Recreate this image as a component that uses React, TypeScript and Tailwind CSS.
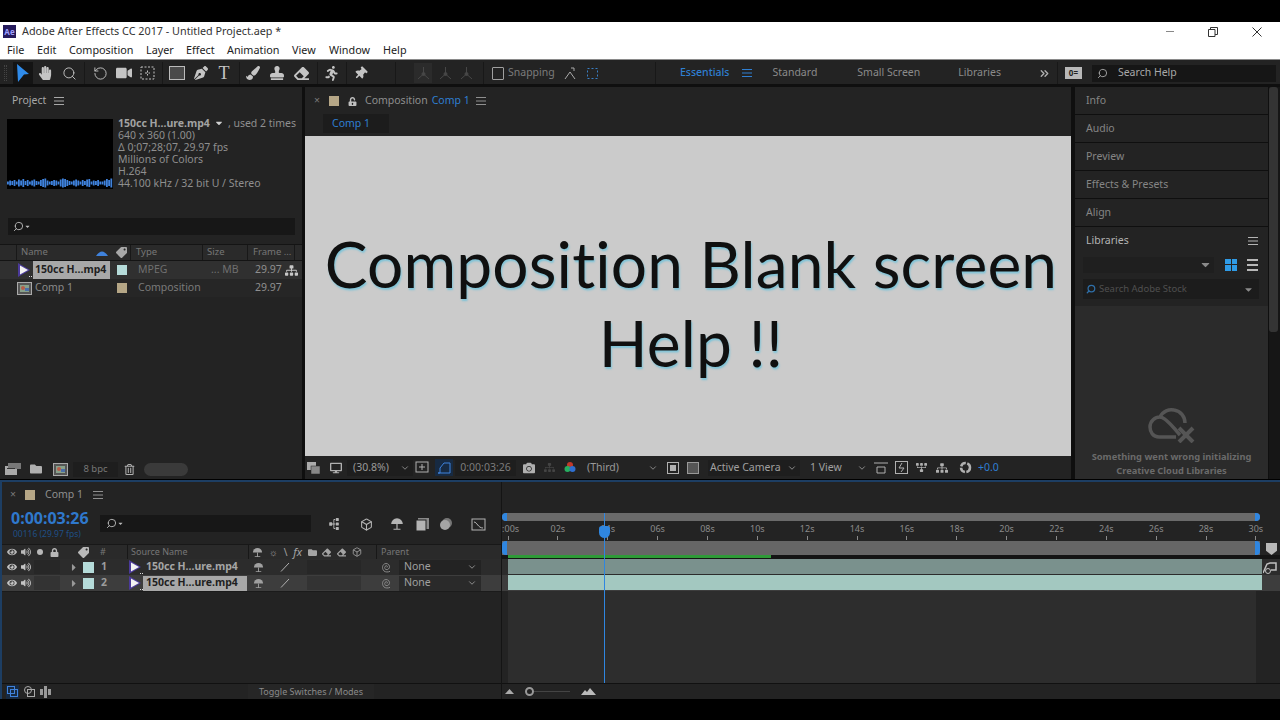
import { ReactNode } from 'react'
import { Search, RotateCcw, ChevronDown, ChevronsRight, Box } from 'lucide-react'
import {
  FaHandPaper, FaVideo, FaPenNib, FaPaintBrush, FaStamp, FaEraser, FaRunning, FaThumbtack,
  FaCamera, FaRegTrashAlt, FaFolder, FaSitemap, FaTag, FaEye, FaVolumeUp, FaLock, FaUnlockAlt,
  FaDesktop, FaCaretDown, FaCaretRight,
} from 'react-icons/fa'

function Slot({ className = '', children }: { className?: string; children?: ReactNode }) {
  return <div className={`flex items-center justify-center shrink-0 ${className}`}>{children}</div>
}

function Burger({ className = '' }: { className?: string }) {
  return (
    <svg width="10" height="8" viewBox="0 0 10 8" className={className}>
      <path d="M0 .5h10M0 4h10M0 7.5h10" stroke="currentColor" strokeWidth="1" />
    </svg>
  )
}

function Sep({ className = '' }: { className?: string }) {
  return <div className={`w-px self-stretch bg-[#181818] shrink-0 ${className}`} />
}

function AxisIcon() {
  return (
    <svg width="13" height="14" viewBox="0 0 13 14" fill="none" stroke="#474747">
      <path d="M6.500 1v7M6.500 8L1 13M6.500 8l5.500 5" />
      <circle cx="6.500" cy="8" r="1.500" fill="#474747" />
    </svg>
  )
}

// the "shy" switch: a dome on a stem
function ShyIcon({ size = 11 }: { size?: number }) {
  return (
    <svg width={size} height={size} viewBox="0 0 12 12" fill="currentColor">
      <path d="M1 6a5 5 0 0 1 10 0z" />
      <path d="M5.500 6h1v4h-1zM3 10h6v1H3z" />
    </svg>
  )
}

function FootageIcon() {
  return (
    <svg width="15" height="16" viewBox="0 0 15 16" className="shrink-0">
      <path d="M1 1v14l12-7z" fill="#4b3a9a" />
      <path d="M3 3.500v9l8-4.500z" fill="#f2f2f2" />
      <path d="M12 14h1v1h-1zM14 14h1v1h-1z" fill="#dddddd" />
    </svg>
  )
}

function CompIcon() {
  return (
    <svg width="15" height="13" viewBox="0 0 15 13" className="shrink-0">
      <rect x="0.5" y="0.5" width="14" height="12" fill="#555" stroke="#aaa" />
      <rect x="3" y="3" width="9" height="7" fill="#88a08a" />
      <circle cx="6" cy="6" r="2" fill="#b65c4a" />
      <rect x="8" y="6" width="4" height="3" fill="#4a6fa8" />
    </svg>
  )
}

function Spiral() {
  return (
    <svg width="12" height="12" viewBox="0 0 12 12" fill="none" stroke="#8a8a8a" strokeWidth="1">
      <path d="M6 6.500c1-.8.3-2-1-1.700-1.700.4-1.800 3-.2 3.700 2 .8 4-1 3.700-3.200C8 3 5.500 1.800 3.300 3 1 4.500 1 8 3 10c1.500 1.200 4 1.300 6 .3" />
    </svg>
  )
}

function TopBar() {
  return (
    <>
      <div className="h-[19px] bg-white flex items-center text-[10.8px] text-[#333333] shrink-0">
        <div className="ml-[3px] w-[13px] h-[13px] bg-[#251a5c] flex items-center justify-center text-[8px] font-bold text-[#a0a0ff]">Ae</div>
        <span className="ml-[6px]">Adobe After Effects CC 2017 - Untitled Project.aep *</span>
        <div className="ml-auto flex items-center text-[#555555]">
          <div className="w-[8px] h-px bg-[#888888]" />
          <Slot className="ml-[34px]">
            <svg width="10" height="10" viewBox="0 0 10 10" fill="none" stroke="#333" strokeWidth="1">
              <path d="M.5 2.500h6.500v7H.5zM2.500 2.500V.5h7v7H7" />
            </svg>
          </Slot>
          <Slot className="ml-[34px] mr-[18px]">
            <svg width="10" height="10" viewBox="0 0 10 10" stroke="#333" strokeWidth="1">
              <path d="M.5.5l9 9M9.500.5l-9 9" />
            </svg>
          </Slot>
        </div>
      </div>
      <div className="h-[18px] bg-white flex items-center text-[10.8px] text-[#222222] shrink-0 pl-[7px]">
        <span className="w-[30px]">File</span>
        <span className="w-[32px]">Edit</span>
        <span className="w-[77px]">Composition</span>
        <span className="w-[40px]">Layer</span>
        <span className="w-[41px]">Effect</span>
        <span className="w-[65px]">Animation</span>
        <span className="w-[37px]">View</span>
        <span className="w-[54px]">Window</span>
        <span>Help</span>
      </div>
      <div className="h-px bg-[#8a8a8a] shrink-0" />
    </>
  )
}

function Toolbar() {
  return (
    <div className="h-[24px] pt-[2px] bg-[#232323] flex items-center shrink-0 text-[#c4c4c4]">
      <div className="ml-[4px] w-[3px] h-[16px] border-x border-dotted border-[#444444]" />
      <Slot className="ml-[6px] w-[20px] h-[22px] bg-[#141414]">
        <svg width="12" height="18" viewBox="0 0 12 18"><path d="M0 0l12 10-5 .5L1 18z" fill="#2f8bea" /></svg>
      </Slot>
      <Slot className="w-[24px]"><FaHandPaper size={14} /></Slot>
      <Slot className="w-[24px]"><Search size={15} strokeWidth={1.5} /></Slot>
      <Sep className="ml-[3px] mr-[3px]" />
      <Slot className="w-[24px]"><RotateCcw size={15} strokeWidth={1.5} /></Slot>
      <Slot className="w-[24px]"><FaVideo size={16} /></Slot>
      <Slot className="w-[23px]">
        <svg width="15" height="14" viewBox="0 0 15 14" fill="none" stroke="currentColor" strokeDasharray="2 1.500">
          <rect x="1" y="1" width="13" height="12" />
          <path d="M5 7h5M7.500 4.500v5" />
        </svg>
      </Slot>
      <Sep className="ml-[3px] mr-[2px]" />
      <Slot className="w-[24px]">
        <div className="w-[16px] h-[14px] border border-[#bbbbbb] bg-[#4a4a4a]" />
      </Slot>
      <Slot className="w-[23px]"><FaPenNib size={14} /></Slot>
      <Slot className="w-[24px] font-['Liberation_Serif',serif] text-[18px] leading-none">T</Slot>
      <Sep className="ml-[3px] mr-[1px]" />
      <Slot className="w-[24px]"><FaPaintBrush size={14} /></Slot>
      <Slot className="w-[24px]"><FaStamp size={14} /></Slot>
      <Slot className="w-[24px]"><FaEraser size={15} /></Slot>
      <Sep className="ml-[4px] mr-[1px]" />
      <Slot className="w-[24px]"><FaRunning size={15} /></Slot>
      <Sep className="ml-[3px] mr-[1px]" />
      <Slot className="w-[24px]"><FaThumbtack size={13} className="rotate-45" /></Slot>
      <Sep className="ml-[23px]" />
      <Slot className="ml-[18px] w-[18px] h-[20px] bg-[#2b2b2b]"><AxisIcon /></Slot>
      <Slot className="ml-[3px] w-[20px]"><AxisIcon /></Slot>
      <Slot className="w-[22px]"><AxisIcon /></Slot>
      <Sep className="ml-[6px]" />
      <div className="ml-[8px] w-[12px] h-[13px] border border-[#a0a0a0] rounded-[1px] shrink-0" />
      <span className="ml-[4px] w-[52px] text-[10.5px] text-[#7c7c7c]">Snapping</span>
      <Slot className="w-[20px]">
        <svg width="13" height="13" viewBox="0 0 13 13" fill="none" stroke="#aaa"><path d="M1 12l5-7 5 7M7 1h3v3" /></svg>
      </Slot>
      <Slot className="ml-[2px] w-[20px]">
        <svg width="11" height="11" viewBox="0 0 11 11" fill="none" stroke="#3a7fc4" strokeDasharray="2 2"><rect x=".5" y=".5" width="10" height="10" /></svg>
      </Slot>
      <Sep className="ml-[53px]" />
      <span className="ml-[24px] text-[10.5px] font-medium text-[#2f7fd2]">Essentials</span>
      <Burger className="ml-[13px] text-[#2f7fd2]" />
      <span className="ml-[20px] text-[10.5px] text-[#8b8b8b]">Standard</span>
      <span className="ml-[40px] text-[10.5px] text-[#8b8b8b]">Small Screen</span>
      <span className="ml-[38px] text-[10.5px] text-[#8b8b8b]">Libraries</span>
      <ChevronsRight size={13} strokeWidth={2.5} className="ml-[37px] text-[#b0b0b0]" />
      <Sep className="ml-[6px]" />
      <Slot className="ml-[7px] w-[17px] h-[12px] bg-[#b8b8b8] text-[#232323] text-[8px] font-bold">0=</Slot>
      <div className="ml-[10px] w-[184px] h-[17px] bg-[#161616] flex items-center pl-[5px] text-[10.5px] text-[#a8a8a8] shrink-0">
        <Search size={11} className="-scale-x-100" />
        <span className="ml-[10px]">Search Help</span>
      </div>
    </div>
  )
}

function ProjectPanel() {
  const wave = [3, 5, 4, 6, 3, 7, 5, 8, 4, 6, 3, 5, 7, 4, 3, 6, 8, 9, 5, 3, 4, 6, 5, 3, 7, 9, 8, 6, 4, 3, 5, 7, 5, 3, 6, 4, 7, 8, 3, 5, 4, 6, 3, 3, 5, 8, 6, 9]
  return (
    <div className="w-[302px] h-[392px] mt-[3px] bg-[#232323] flex flex-col text-[#8f8f8f] text-[10.5px]">
      <div className="h-[26px] pt-[2px] flex items-center pl-[12px] text-[#a8a8a8] shrink-0">
        Project
        <Burger className="ml-[8px]" />
      </div>
      <div className="h-[1px] shrink-0" />
      <div className="flex mt-[5px] pl-[7px] h-[72px] shrink-0">
        <div className="w-[106px] h-[70px] bg-black flex items-end shrink-0">
          <svg width="106" height="10" viewBox="0 0 106 10" className="mb-px">
            {wave.map((h, i) => (
              <rect key={i} x={i * 2.200} y={5 - h / 2} width="1.800" height={h} fill="#3f82dc" />
            ))}
          </svg>
        </div>
        <div className="ml-[5px] -mt-[2px] leading-[12px] whitespace-nowrap flex flex-col">
          <div className="flex items-center">
            <span className="font-bold text-[#a2a2a2]">150cc H...ure.mp4</span>
            <FaCaretDown size={10} className="ml-[4px] text-[#d0d0d0]" />
            <span className="ml-[4px]">, used 2 times</span>
          </div>
          <span>640 x 360 (1.00)</span>
          <span>Δ 0;07;28;07, 29.97 fps</span>
          <span>Millions of Colors</span>
          <span>H.264</span>
          <span>44.100 kHz / 32 bit U / Stereo</span>
        </div>
      </div>
      <div className="mt-[27px] ml-[8px] w-[287px] h-[17px] bg-[#171717] flex items-center pl-[5px] shrink-0 text-[#bbbbbb]">
        <Search size={11} className="-scale-x-100" />
        <FaCaretDown size={7} />
      </div>
      <div className="mt-[9px] h-[17px] bg-[#2a2a2a] border-y border-[#141414] flex items-center text-[9.5px] text-[#777777] shrink-0">
        <Sep className="ml-[16px] mr-[4px]" />
        <span className="w-[75px]">Name</span>
        <svg width="12" height="6" viewBox="0 0 12 6"><path d="M0 6q6-9 12 0z" fill="#3f82dc" /></svg>
        <FaTag size={11} className="ml-[8px] rotate-90 text-[#a8a8a8]" />
        <Sep className="ml-[3px] mr-[5px]" />
        <span className="w-[66px]">Type</span>
        <Sep className="mr-[4px]" />
        <span className="w-[40px]">Size</span>
        <Sep className="mr-[5px]" />
        <span className="w-[41px] whitespace-nowrap">Frame ...</span>
        <Sep />
      </div>
      <div className="h-[18px] bg-[#303030] flex items-center shrink-0">
        <div className="ml-[17px]"><FootageIcon /></div>
        <div className="ml-px w-[77px] h-[18px] bg-[#a8a8a8] text-[#1f1f1f] font-bold flex items-center pl-[2px] whitespace-nowrap">150cc H...mp4</div>
        <div className="ml-[7px] w-[10px] h-[10px] bg-[#b5dbd9]" />
        <span className="ml-[11px] w-[73px] text-[#6f6f6f]">MPEG</span>
        <span className="w-[44px] text-[#6f6f6f]">... MB</span>
        <span className="w-[30px]">29.97</span>
        <FaSitemap size={13} className="text-[#c8c8c8]" />
      </div>
      <div className="h-[18px] bg-[#262626] flex items-center shrink-0">
        <div className="ml-[17px]"><CompIcon /></div>
        <span className="ml-[3px] w-[76px] text-[#8a8a8a]">Comp 1</span>
        <div className="ml-[6px] w-[10px] h-[10px] bg-[#b5a686]" />
        <span className="ml-[11px] w-[117px] text-[#7a7a7a]">Composition</span>
        <span>29.97</span>
      </div>
      <div className="mt-auto h-[20px] flex items-center shrink-0 text-[#b0b0b0]">
        <Slot className="ml-[4px] w-[18px]">
          <svg width="16" height="12" viewBox="0 0 16 12"><rect y="3" width="12" height="9" fill="#aaa" /><rect x="3" width="13" height="6" fill="#777" /><rect x="2" y="5" width="8" height="1" fill="#333" /></svg>
        </Slot>
        <Slot className="ml-[5px] w-[18px]"><FaFolder size={12} /></Slot>
        <Slot className="ml-[6px] w-[18px]"><CompIcon /></Slot>
        <div className="ml-[4px] w-[45px] h-[15px] bg-[#1e1e1e] flex items-center justify-center text-[9.5px] text-[#777777]">8 bpc</div>
        <Slot className="ml-[4px] w-[14px]"><FaRegTrashAlt size={11} /></Slot>
        <div className="ml-[8px] w-[44px] h-[13px] rounded-full bg-[#3a3a3a]" />
      </div>
    </div>
  )
}

function CompPanel() {
  return (
    <div className="ml-[3px] w-[766px] h-[392px] mt-[3px] bg-[#232323] flex flex-col text-[10.5px] text-[#8f8f8f]">
      <div className="h-[26px] pt-[2px] flex items-center shrink-0">
        <span className="ml-[9px] w-[10px] text-[#777777]">×</span>
        <div className="ml-[5px] w-[10px] h-[10px] bg-[#b5a686]" />
        <FaUnlockAlt size={9} className="ml-[9px] text-[#c0c0c0]" />
        <span className="ml-[8px]">Composition</span>
        <span className="ml-[4px] text-[#2f7fd2]">Comp 1</span>
        <Burger className="ml-[6px]" />
      </div>
      <div className="h-[23px] pl-[18px] flex items-end shrink-0">
        <div className="w-[66px] h-[19px] bg-[#1c1c1c] text-[#2f7fd2] flex items-center pl-[9px] mb-[3px]">Comp 1</div>
      </div>
      <div className="h-[320px] bg-[#cbcbcb] flex flex-col items-center pt-[88px] pl-[6px] shrink-0 font-['Lato',sans-serif] text-[64px] leading-[79px] tracking-[0.15px] text-[#101010] [font-variant-ligatures:none] [text-shadow:1px_2px_2px_#7fc4d8]">
        <span className="whitespace-nowrap">Composition Blank screen</span>
        <span>Help !!</span>
      </div>
      <div className="h-[23px] flex items-center shrink-0 text-[#b0b0b0]">
        <Slot className="ml-[1px] w-[14px]">
          <svg width="13" height="12" viewBox="0 0 13 12"><rect width="9" height="8" fill="#aaa" /><rect x="4" y="4" width="9" height="8" fill="#888" stroke="#222" strokeWidth=".5" /></svg>
        </Slot>
        <Slot className="ml-[9px] w-[14px]"><FaDesktop size={12} /></Slot>
        <div className="ml-[4px] w-[66px] h-[16px] bg-[#1e1e1e] flex items-center pl-[6px] text-[#9a9a9a]">
          (30.8%)
          <ChevronDown size={10} className="ml-[11px]" />
        </div>
        <Slot className="ml-[1px] w-[16px]">
          <svg width="14" height="14" viewBox="0 0 14 14" fill="none" stroke="#b0b0b0"><rect x="1" y="1" width="12" height="10" /><path d="M7 3v6M4 6h6" /></svg>
        </Slot>
        <Slot className="ml-[5px] w-[18px] h-[17px] bg-[#172a42]">
          <svg width="14" height="14" viewBox="0 0 14 14" fill="none" stroke="#3f82dc"><path d="M1 12h12V2H7L3 7v5z" /></svg>
        </Slot>
        <div className="ml-[2px] w-[61px] h-[16px] bg-[#1e1e1e] flex items-center justify-center text-[#7c7c7c]">0:00:03:26</div>
        <Slot className="ml-[5px] w-[16px]"><FaCamera size={12} /></Slot>
        <Slot className="ml-[4px] w-[16px] text-[#444444]"><FaSitemap size={11} /></Slot>
        <Slot className="ml-[5px] w-[16px]">
          <svg width="12" height="14" viewBox="0 0 12 14"><circle cx="6" cy="4" r="3" fill="#c0392b" /><circle cx="3.500" cy="8" r="3" fill="#27ae60" /><circle cx="8.500" cy="8" r="3" fill="#2f6fd0" /></svg>
        </Slot>
        <div className="ml-[9px] w-[73px] flex items-center text-[#9a9a9a]">
          (Third)
          <ChevronDown size={10} className="ml-auto mr-[2px]" />
        </div>
        <Slot className="ml-[6px] w-[14px]">
          <div className="w-[12px] h-[12px] border border-[#b0b0b0] flex items-center justify-center"><div className="w-[6px] h-[6px] bg-[#b0b0b0]" /></div>
        </Slot>
        <Slot className="ml-[6px] w-[14px]">
          <div className="w-[12px] h-[12px] border border-[#999999] bg-[#555555]" />
        </Slot>
        <div className="ml-[8px] w-[92px] h-[16px] bg-[#1e1e1e] flex items-center pl-[2px] text-[#a0a0a0]">
          Active Camera
          <ChevronDown size={10} className="ml-auto mr-[3px]" />
        </div>
        <div className="ml-[10px] w-[57px] flex items-center text-[#a0a0a0]">
          1 View
          <ChevronDown size={10} className="ml-auto" />
        </div>
        <Slot className="ml-[6px] w-[16px]">
          <svg width="14" height="12" viewBox="0 0 14 12" fill="none" stroke="#b0b0b0"><path d="M0 1h14M3 5h8v6H3z" /></svg>
        </Slot>
        <Slot className="ml-[4px] w-[16px]">
          <svg width="13" height="13" viewBox="0 0 13 13" fill="none" stroke="#b0b0b0"><rect x=".5" y=".5" width="12" height="12" /><path d="M7 2L4 7h5l-3 4" /></svg>
        </Slot>
        <Slot className="ml-[4px] w-[16px]"><FaSitemap size={11} className="rotate-180" /></Slot>
        <Slot className="ml-[5px] w-[16px]"><FaSitemap size={12} /></Slot>
        <Slot className="ml-[7px] w-[16px]">
          <svg width="13" height="13" viewBox="0 0 13 13" fill="none" stroke="#b0b0b0" strokeWidth="2.500"><circle cx="6.500" cy="6.500" r="4.500" strokeDasharray="6 1.500" /></svg>
        </Slot>
        <span className="ml-[5px] text-[#2f7fd2]">+0.0</span>
      </div>
    </div>
  )
}

function CollapsedTab({ label }: { label: string }) {
  return (
    <div className="h-[27px] bg-[#232323] flex items-center pl-[11px] text-[10.5px] text-[#858585] mb-px shrink-0">
      {label}
    </div>
  )
}

function RightPanel() {
  return (
    <div className="ml-[4px] w-[193px] mt-[3px] h-[392px] flex flex-col">
      <CollapsedTab label="Info" />
      <CollapsedTab label="Audio" />
      <CollapsedTab label="Preview" />
      <CollapsedTab label="Effects & Presets" />
      <CollapsedTab label="Align" />
      <div className="flex-1 bg-[#232323] flex flex-col">
        <div className="h-[28px] flex items-center justify-between pl-[11px] pr-[10px] text-[10.5px] text-[#b4b4b4] shrink-0">
          Libraries
          <Burger />
        </div>
        <div className="mt-px flex items-center pl-[8px] h-[17px] shrink-0">
          <div className="w-[131px] h-[16px] bg-[#1f1f1f] flex items-center justify-end pr-[2px] text-[#8a8a8a]"><FaCaretDown size={13} /></div>
          <div className="ml-[11px] w-[12px] h-[12px] grid grid-cols-2 gap-px">
            <div className="bg-[#2f9be6]" /><div className="bg-[#2f9be6]" /><div className="bg-[#2f9be6]" /><div className="bg-[#2f9be6]" />
          </div>
          <div className="ml-[10px] w-[11px] h-[12px] flex flex-col justify-between">
            <div className="h-[2px] bg-[#b8b8b8]" /><div className="h-[2px] bg-[#b8b8b8]" /><div className="h-[2px] bg-[#b8b8b8]" />
          </div>
        </div>
        <div className="mt-[6px] ml-[8px] w-[176px] h-[20px] bg-[#1c1c1c] flex items-center pl-[3px] text-[9.5px] text-[#4f4f4f] shrink-0">
          <Search size={10} strokeWidth={3} className="-scale-x-100 text-[#2f6fa8]" />
          <span className="ml-[3px]">Search Adobe Stock</span>
          <FaCaretDown size={11} className="ml-auto mr-[5px] text-[#8a8a8a]" />
        </div>
        <div className="mt-[7px] flex-1 bg-[#2b2b2b] flex flex-col items-center justify-end pb-[1px] text-[9.3px] leading-[14px] font-bold text-[#6a6a6a]">
          <svg width="48" height="36" viewBox="0 0 48 36" fill="none" stroke="#555555" strokeWidth="3.500" className="mb-[7px]">
            <path d="M28 30H11C5 30 2 25 2 20c0-6 5-10 10-10 3-6 9-8 14-7 7 1 11 7 11 13" />
            <path d="M12 10c6 0 18 16 20 18" />
            <path d="M31 21l14 14M45 21L31 35" strokeWidth="4" />
          </svg>
          <span>Something went wrong initializing</span>
          <span>Creative Cloud Libraries</span>
        </div>
      </div>
    </div>
  )
}

function Scrollbar() {
  return (
    <div className="ml-px w-[11px] mt-[3px] h-[392px] bg-[#161616] pr-[2px]">
      <div className="h-[245px] rounded-[3px] bg-[#343434]" />
    </div>
  )
}

function LayerRow({ n, selected }: { n: number; selected?: boolean }) {
  return (
    <div className={`h-[16px] flex items-center shrink-0 ${selected ? 'bg-[#3d3d3d]' : 'bg-[#2c2c2c]'}`}>
      <Slot className="ml-[3px] w-[14px] text-[#c4c4c4]"><FaEye size={10} /></Slot>
      <Slot className="w-[14px] text-[#c4c4c4]"><FaVolumeUp size={10} /></Slot>
      <div className={`ml-[1px] w-[26px] h-[14px] ${selected ? 'bg-[#333333]' : 'bg-[#272727]'}`} />
      <Slot className="ml-[9px] w-[10px] text-[#999999]"><FaCaretRight size={11} /></Slot>
      <div className="ml-[4px] w-[11px] h-[11px] bg-[#b5dbd9]" />
      <span className="ml-[7px] w-[12px] text-[10.5px] font-bold text-[#9c9c9c]">{n}</span>
      <div className="ml-[15px]"><FootageIcon /></div>
      {selected ? (
        <div className="w-[104px] h-[15px] bg-[#a8a8a8] text-[#1f1f1f] font-bold text-[10.5px] flex items-center pl-[3px] whitespace-nowrap">150cc H...ure.mp4</div>
      ) : (
        <div className="w-[104px] text-[#a6a6a6] font-bold text-[10.5px] pl-[3px] whitespace-nowrap">150cc H...ure.mp4</div>
      )}
      <Slot className="ml-[4px] w-[14px] text-[#a0a0a0]"><ShyIcon /></Slot>
      <Slot className="ml-[13px] w-[14px]">
        <svg width="10" height="10" viewBox="0 0 10 10" stroke="#b0b0b0"><path d="M1 9.500L9 1" /></svg>
      </Slot>
      <div className={`ml-[15px] w-[54px] h-[14px] ${selected ? 'bg-[#333333]' : 'bg-[#272727]'}`} />
      <Slot className="ml-[20px] w-[12px]"><Spiral /></Slot>
      <div className={`ml-[6px] w-[82px] h-[15px] flex items-center pl-[5px] text-[10.5px] text-[#a0a0a0] ${selected ? 'bg-[#2a2a2a]' : 'bg-[#232323]'}`}>
        None
        <ChevronDown size={10} className="ml-auto mr-[4px]" />
      </div>
    </div>
  )
}

function TimelineLeft() {
  return (
    <div className="w-[499px] flex flex-col shrink-0">
      <div className="h-[25px] flex items-center text-[10.5px] text-[#8f8f8f] shrink-0">
        <span className="ml-[8px] w-[10px] text-[#777777]">×</span>
        <div className="ml-[5px] w-[10px] h-[10px] bg-[#b5a686]" />
        <span className="ml-[10px]">Comp 1</span>
        <Burger className="ml-[10px]" />
      </div>
      <div className="h-[37px] flex shrink-0">
        <div className="ml-[9px] w-[89px] flex flex-col pt-[1px]">
          <span className="text-[16px] leading-[20px] font-bold text-[#2f78cc]">0:00:03:26</span>
          <span className="ml-[2px] text-[8.5px] leading-[12px] text-[#1f4f85] whitespace-nowrap">00116 (29.97 fps)</span>
        </div>
        <div className="mt-[8px] w-[211px] h-[17px] bg-[#171717] flex items-center pl-[6px] text-[#bbbbbb]">
          <Search size={11} className="-scale-x-100" />
          <FaCaretDown size={7} />
        </div>
        <div className="flex items-center h-[34px] text-[#b4b4b4]">
          <Slot className="ml-[15px] w-[16px]"><FaSitemap size={12} className="-rotate-90" /></Slot>
          <Slot className="ml-[16px] w-[16px]"><Box size={13} /></Slot>
          <Slot className="ml-[15px] w-[16px]"><ShyIcon size={14} /></Slot>
          <Slot className="ml-[9px] w-[16px]">
            <svg width="13" height="13" viewBox="0 0 13 13"><rect x="2" width="11" height="11" fill="#8a8a8a" /><rect y="2" width="10" height="11" fill="#b4b4b4" stroke="#232323" /></svg>
          </Slot>
          <Slot className="ml-[8px] w-[16px]">
            <svg width="14" height="14" viewBox="0 0 14 14"><circle cx="8" cy="6" r="5" fill="#777" /><circle cx="6" cy="8" r="5" fill="#a4a4a4" /></svg>
          </Slot>
          <Slot className="ml-[16px] w-[16px]">
            <svg width="15" height="14" viewBox="0 0 15 14" fill="none" stroke="#b4b4b4"><rect x="1" y="2" width="13" height="11" /><path d="M3 5c3 0 4 6 9 6" /></svg>
          </Slot>
        </div>
      </div>
      <div className="h-[15px] bg-[#2a2a2a] flex items-center text-[9px] text-[#777777] shrink-0 border-t border-[#181818]">
        <Slot className="ml-[3px] w-[14px] text-[#b8b8b8]"><FaEye size={10} /></Slot>
        <Slot className="w-[14px] text-[#b8b8b8]"><FaVolumeUp size={10} /></Slot>
        <div className="ml-[4px] w-[6px] h-[6px] rounded-full bg-[#b8b8b8]" />
        <Slot className="ml-[4px] w-[14px] text-[#b8b8b8]"><FaLock size={9} /></Slot>
        <Slot className="ml-[15px] w-[14px] text-[#b8b8b8]"><FaTag size={11} className="rotate-90" /></Slot>
        <span className="ml-[10px] w-[27px]">#</span>
        <Sep className="mr-[3px]" />
        <span className="w-[117px]">Source Name</span>
        <Sep className="mr-[3px]" />
        <div className="w-[124px] flex items-center justify-between pr-[14px] text-[#a4a4a4]">
          <ShyIcon />
          <span className="text-[10px]">☼</span>
          <span className="text-[10px]">\</span>
          <span className="italic text-[11px]">fx</span>
          <FaFolder size={9} />
          <FaEraser size={9} />
          <FaEraser size={9} />
          <Box size={10} />
        </div>
        <Sep className="mr-[4px]" />
        <span>Parent</span>
      </div>
      <LayerRow n={1} />
      <LayerRow n={2} selected />
      <div className="flex-1 bg-[#232323] border-t border-[#1b1b1b]" />
      <div className="h-[16px] flex items-center shrink-0 border-t border-[#111111] text-[#aaaaaa]">
        <Slot className="ml-[4px] w-[13px] h-[14px] bg-[#172a42]">
          <svg width="11" height="11" viewBox="0 0 11 11" fill="none" stroke="#3f82dc"><rect x=".5" y=".5" width="7" height="7" /><rect x="3.500" y="3.500" width="7" height="7" /></svg>
        </Slot>
        <Slot className="ml-[4px] w-[12px]">
          <svg width="11" height="11" viewBox="0 0 11 11" fill="none" stroke="#aaa"><circle cx="4" cy="4" r="3.500" /><rect x="3.500" y="3.500" width="7" height="7" /></svg>
        </Slot>
        <Slot className="ml-[4px] w-[12px]">
          <svg width="11" height="12" viewBox="0 0 11 12" fill="#999"><rect x="0" y="3" width="3" height="6" /><rect x="4" y="0" width="3" height="12" /><rect x="8" y="3" width="3" height="6" /></svg>
        </Slot>
        <div className="ml-[197px] w-[126px] h-[15px] bg-[#262626] flex items-center justify-center text-[9px] text-[#8a8a8a]">Toggle Switches / Modes</div>
      </div>
    </div>
  )
}

function TimelineRight() {
  const secs = ['0:00s', '02s', '04s', '06s', '08s', '10s', '12s', '14s', '16s', '18s', '20s', '22s', '24s', '26s', '28s', '30s']
  return (
    <div className="relative flex-1 flex flex-col border-l border-[#141414]">
      <div className="h-[30px] shrink-0" />
      <div className="h-[25px] flex flex-col shrink-0">
        <div className="mt-[1px] h-[8px] w-[758px] bg-[#6a6a6a] rounded-[4px] flex justify-between">
          <div className="w-[5px] bg-[#2f86e0] rounded-l-[4px]" />
          <div className="w-[5px] bg-[#2f86e0] rounded-r-[4px]" />
        </div>
      </div>
      <div className="absolute top-[41px] left-0 h-[20px] w-[778px] overflow-hidden">
        <div className="-ml-[4px] w-[768px] flex justify-between">
          {secs.map((s) => (
            <div key={s} className="w-[20px] flex flex-col items-center text-[9px] leading-[12px] text-[#8a8a8a]">
              <span className="whitespace-nowrap">{s}</span>
              <div className="mt-[1px] w-px h-[4px] bg-[#8a8a8a]" />
            </div>
          ))}
        </div>
      </div>
      <div className="h-[4px] shrink-0" />
      <div className="h-[14px] w-[758px] bg-[#666666] flex justify-between shrink-0">
        <div className="w-[5px] bg-[#2f86e0] rounded-l-[4px]" />
        <div className="w-[5px] bg-[#2f86e0] rounded-r-[4px]" />
      </div>
      <div className="h-[4px] bg-[#141414] shrink-0 pl-[6px]">
        <div className="w-[263px] h-[3px] bg-[#2f9a38]" />
      </div>
      <div className="h-[16px] bg-[#2c2c2c] pl-[6px] pb-px shrink-0">
        <div className="w-[754px] h-[15px] bg-[#7a918d]" />
      </div>
      <div className="h-[16px] bg-[#3d3d3d] pl-[6px] pb-px shrink-0">
        <div className="w-[754px] h-[15px] bg-[#a3c8c0]" />
      </div>
      <div className="flex-1 flex">
        <div className="w-[6px] bg-[#232323]" />
        <div className="w-[748px] bg-[#2d2d2d]" />
      </div>
      <div className="h-[16px] flex items-center shrink-0 border-t border-[#111111] text-[#aaaaaa]">
        <svg width="9" height="5" viewBox="0 0 9 5" className="ml-[3px]"><path d="M0 5l4.500-5 4.500 5z" fill="#aaa" /></svg>
        <div className="ml-[11px] w-[9px] h-[9px] rounded-full border-2 border-[#999999]" />
        <div className="w-[36px] h-px bg-[#444444]" />
        <svg width="15" height="7" viewBox="0 0 15 7" className="ml-[11px]"><path d="M0 7l4-5 2 2 3-4 6 7z" fill="#bbb" /></svg>
      </div>
      {/* playhead + cap */}
      <div className="absolute left-[102px] top-[31px] bottom-[16px] w-px bg-[#2f86e0]" />
      <div className="absolute left-[97px] top-[44px] w-[11px] h-[12px] bg-[#2f86e0] rounded-b-[6px] rounded-t-[3px]" />
      {/* marker and comp button at the far right */}
      <div className="absolute left-[764px] top-[61px] w-[11px] h-[12px] bg-[#b8b8b8] [clip-path:polygon(0_0,100%_0,100%_65%,50%_100%,0_65%)]" />
      <div className="absolute left-[761px] top-[80px]">
        <svg width="14" height="12" viewBox="0 0 14 12" fill="none" stroke="#c0c0c0">
          <path d="M0 11l4-9 3-1h6v7H8" strokeWidth="1.500" />
          <circle cx="5" cy="9" r="2.500" />
        </svg>
      </div>
    </div>
  )
}

function Timeline() {
  return (
    <div className="h-[219px] mt-px bg-[#232323] border-t-2 border-l-2 border-[#1d3e63] flex shrink-0">
      <TimelineLeft />
      <TimelineRight />
    </div>
  )
}

export default function App() {
  return (
    <div className="w-[1280px] h-[720px] bg-black flex flex-col overflow-hidden font-['Noto_Sans',sans-serif]">
      <div className="h-[22px] shrink-0" />
      <TopBar />
      <Toolbar />
      <div className="h-[395px] bg-[#0f0f0f] flex shrink-0">
        <ProjectPanel />
        <CompPanel />
        <RightPanel />
        <Scrollbar />
      </div>
      <Timeline />
    </div>
  )
}
